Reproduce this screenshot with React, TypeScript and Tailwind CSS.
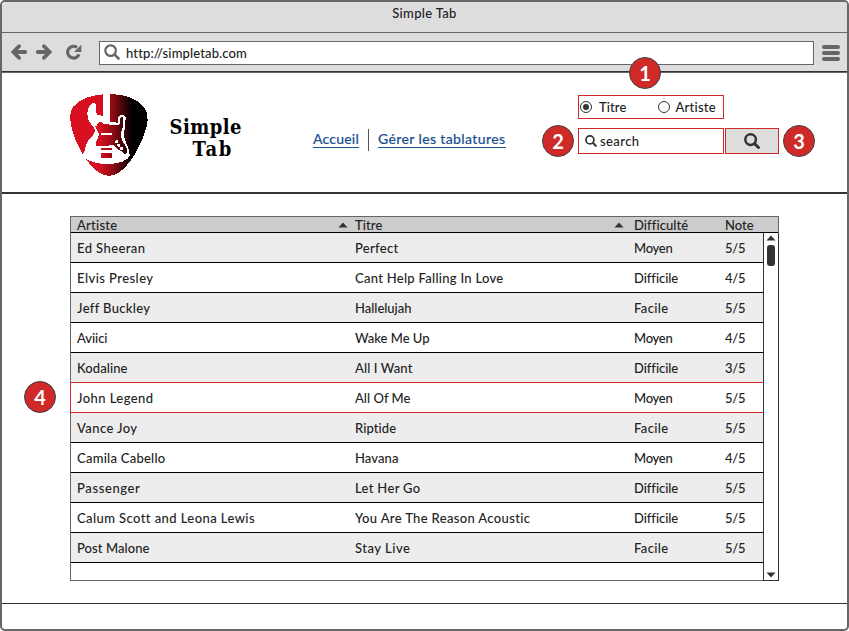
import { useLayoutEffect, useRef, useState } from "react";

// Text tracked so that it spans a given width in pixels.
function Fit({ t, w, className = "" }: { t: string; w: number; className?: string }) {
  const ref = useRef<HTMLSpanElement>(null);
  const [spacing, setSpacing] = useState(0);
  useLayoutEffect(() => {
    if (ref.current) {
      setSpacing((w - 0.5 - ref.current.getBoundingClientRect().width) / t.length);
    }
  }, [t, w]);
  return (
    <span ref={ref} className={`inline-block whitespace-pre ${className}`} style={{ letterSpacing: spacing }}>
      {t}
    </span>
  );
}

type Cell = [string, number];
const rows: [Cell, Cell, Cell, string][] = [
  [["Ed Sheeran", 69], ["Perfect", 44], ["Moyen", 39], "5/5"],
  [["Elvis Presley", 77], ["Cant Help Falling In Love", 149], ["Difficile", 44], "4/5"],
  [["Jeff Buckley", 73.5], ["Hallelujah", 57], ["Facile", 35], "5/5"],
  [["Aviici", 31], ["Wake Me Up", 75], ["Moyen", 39], "4/5"],
  [["Kodaline", 51], ["All I Want", 58], ["Difficile", 44], "3/5"],
  [["John Legend", 77], ["All Of Me", 56], ["Moyen", 39], "5/5"],
  [["Vance Joy", 61], ["Riptide", 42], ["Facile", 35], "5/5"],
  [["Camila Cabello", 89], ["Havana", 44], ["Moyen", 39], "4/5"],
  [["Passenger", 64], ["Let Her Go", 66], ["Difficile", 44], "5/5"],
  [["Calum Scott and Leona Lewis", 178], ["You Are The Reason Acoustic", 176], ["Difficile", 44], "5/5"],
  [["Post Malone", 73], ["Stay Live", 56], ["Facile", 35], "5/5"],
];

function Search({ className, sw }: { className: string; sw: number }) {
  return (
    <svg viewBox="0 0 16 16" className={className} fill="none" stroke="currentColor" strokeWidth={sw}>
      <circle cx="6.6" cy="6.6" r="5.3" />
      <path d="M10.6 10.6l3.9 3.9" strokeLinecap="round" strokeWidth={sw + 0.4} />
    </svg>
  );
}

function Badge({ n, className }: { n: string; className: string }) {
  return (
    <div
      className={`absolute flex size-8 items-center justify-center rounded-full border border-[#444] bg-[#cf2a27] pb-px font-['Lato'] text-[20px] leading-none font-bold text-white ${className}`}
    >
      {n}
    </div>
  );
}

function Up({ className = "" }: { className?: string }) {
  return (
    <svg viewBox="0 0 10 6" className={`h-[6px] w-[10px] ${className}`} fill="#333">
      <path d="M5 .5L9.5 5.5H.5z" />
    </svg>
  );
}

function Logo() {
  return (
    <svg viewBox="0 0 300 300" className="size-[100px]" shapeRendering="crispEdges">
      <defs>
        <linearGradient id="pick" gradientUnits="userSpaceOnUse" x1="118" y1="0" x2="216" y2="0">
          <stop offset="0" stopColor="#d80f20" />
          <stop offset="0.3" stopColor="#a80c18" />
          <stop offset="1" stopColor="#000" />
        </linearGradient>
      </defs>
      <path
        fill="url(#pick)"
        d="M147 27C105 27 62 38 40 65C29 78 29 98 33 120C39 151 53 183 70 210C90 242 117 273 147 273C178 273 204 240 222 212C240 181 253 153 260 123C266 99 262 78 252 66C230 38 188 27 147 27Z"
      />
      {/* guitar silhouette */}
      <path
        fill="#fff"
        d="M129 20H151V111L173 113C178 108 169 102 175 95C183 85 198 88 197 101C194 116 198 127 191 143C189 162 209 188 209 211C205 224 183 237 147 237C113 237 82 231 66 211C73 200 77 193 78 180C80 165 106 151 105 135C101 125 86 113 83 98C80 80 85 60 96 55C106 52 113 60 108 66C104 76 110 86 113 92L129 94Z"
      />
      <path fill="#fff" d="M112 90L126 92V112H112z" />
      {/* pickguard */}
      <path
        fill="url(#pick)"
        d="M106 125C112 122 116 110 124 109L130 117L151 119L176 121C184 116 175 106 181 99C186 92 193 98 190 107C187 119 190 130 184 141C179 154 188 171 198 185C204 196 201 208 194 207C187 205 186 196 175 194C167 192 162 176 152 180L140 183H110C104 176 110 166 114 158C121 145 111 137 106 125Z"
      />
      <path fill="#fff" d="M123 144H156V150H123zM104 183H158V190H104z" />
      <path fill="url(#pick)" d="M123 190H156V195H123zM123 204H156V219H123z" />
      <g fill="#fff">
        <circle cx="170" cy="170" r="4.5" />
        <circle cx="176" cy="181" r="4.5" />
        <circle cx="184" cy="190" r="5.5" />
      </g>
    </svg>
  );
}

export default function App() {
  return (
    <div className="relative h-[631px] w-[849px] bg-white font-['Lato',sans-serif] text-[13px] leading-[16px] font-medium text-[#222]">
      <div className="flex h-full flex-col overflow-hidden rounded-[5px] border-2 border-[#666]">
        <div className="flex h-[30px] shrink-0 justify-center bg-[#ddd] pt-[3px]">
          <Fit t="Simple Tab" w={65} />
        </div>
        <div className="flex h-[39px] shrink-0 items-center border-t border-[#666] bg-[#ddd] pt-px pl-[9px] text-[#666]">
          <svg
            viewBox="0 0 16 16"
            className="-mt-px size-4"
            fill="none"
            stroke="currentColor"
            strokeWidth="3.8"
            strokeLinecap="round"
          >
            <path d="M8 2.2L2.4 8L8 13.8M3 8H14.2" />
          </svg>
          <svg
            viewBox="0 0 16 16"
            className="-mt-px ml-[9px] size-4"
            fill="none"
            stroke="currentColor"
            strokeWidth="3.8"
            strokeLinecap="round"
          >
            <path d="M8 2.2L13.6 8L8 13.8M13 8H1.8" />
          </svg>
          <svg viewBox="0 0 17 16" className="-mt-px mr-px ml-[13px] h-4 w-[17px]">
            <path d="M14 10.4A5.9 5.9 0 1 1 12 3.4" fill="none" stroke="currentColor" strokeWidth="3.1" />
            <path d="M16.4 .8V8H9z" fill="currentColor" />
          </svg>
          <div className="ml-4 flex h-6 w-[715px] shrink-0 items-center border border-[#666] bg-white pl-1 text-[#222]">
            <Search className="-mt-px size-4 text-[#666]" sw={2.2} />
            <Fit t="http://simpletab.com" w={121} className="ml-[6px]" />
          </div>
          <div className="ml-2 flex flex-col gap-[2px]">
            <i className="h-1 w-[18px] rounded-full bg-[#666]" />
            <i className="h-1 w-[18px] rounded-full bg-[#666]" />
            <i className="h-1 w-[18px] rounded-full bg-[#666]" />
          </div>
        </div>
        <div className="-mx-px flex h-[533px] shrink-0 flex-col border border-[#333]">
          <header className="flex h-[122px] shrink-0 border-t border-b-2 border-t-[#666] border-b-[#333] pl-[58px]">
            <div className="mt-3 shrink-0">
              <Logo />
            </div>
            <div className="mt-[43px] ml-2 flex w-[74px] shrink-0 flex-col items-end font-['DejaVu_Serif_Condensed','DejaVu_Serif',serif] text-[20px] leading-[22px] font-bold text-black">
              <Fit t="Simple" w={73} />
              <Fit t="Tab" w={41} className="mr-[9px]" />
            </div>
            <nav className="mt-[56px] ml-[71px] flex h-[23px] w-[265px] shrink-0 text-[14px] leading-[20px] text-[#1b5091] [-webkit-text-stroke:0.15px]">
              <a className="h-[19px] border-b border-[#1b5091]">
                <Fit t="Accueil" w={46.5} />
              </a>
              <div className="mx-[9px] h-[22px] w-px bg-[#555]" />
              <a className="h-[19px] border-b border-[#1b5091]">
                <Fit t="Gérer les tablatures" w={128} />
              </a>
            </nav>
            <div className="mt-[22px] flex shrink-0 flex-col gap-[9px]">
              <div className="flex h-6 w-[146px] items-center border border-[#cf2a27] pl-[1px]">
                <i className="flex size-3 items-center justify-center rounded-full border border-[#333]">
                  <b className="size-[6px] rounded-full bg-[#333]" />
                </i>
                <Fit t="Titre" w={28} className="ml-[7px]" />
                <i className="ml-[31px] size-3 rounded-full border border-[#333]" />
                <Fit t="Artiste" w={41} className="ml-[6px]" />
              </div>
              <div className="flex gap-px">
                <div className="flex h-[26px] w-[146px] items-center border border-[#cf2a27] pl-[6px]">
                  <Search className="size-3 text-[#333]" sw={2.3} />
                  <Fit t="search" w={40} className="-mt-px ml-[3px]" />
                </div>
                <div className="flex h-[26px] w-[54px] items-center justify-center border border-[#cf2a27] bg-[#ddd]">
                  <Search className="-mt-px size-4 text-[#333]" sw={2.5} />
                </div>
              </div>
            </div>
          </header>
          <main className="mt-[22px] ml-[68px] flex h-[365px] w-[709px] flex-col border border-[#666]">
            <div className="flex h-[15px] shrink-0 items-center bg-[#ccc] pl-[6px]">
              <div className="flex w-[278px] items-center">
                <Fit t="Artiste" w={41} />
                <Up className="mr-[7px] ml-auto" />
              </div>
              <div className="flex w-[279px] items-center">
                <Fit t="Titre" w={28} />
                <Up className="mr-[10px] ml-auto" />
              </div>
              <div className="w-[91px]">
                <Fit t="Difficulté" w={54} />
              </div>
              <Fit t="Note" w={29} />
            </div>
            <div className="flex min-h-0 flex-1 border-t border-black">
              <div className="w-[692px]">
                {rows.map((r, i) => (
                  <div
                    key={i}
                    className={`flex h-[30px] items-center border-b pl-[6px] ${i % 2 ? "bg-white" : "bg-[#ededed]"} ${i === 4 || i === 5 ? "border-[#cf2a27]" : "border-black"} ${i === 5 ? "-ml-px border-l" : ""}`}
                  >
                    <div className="w-[278px]">
                      <Fit t={r[0][0]} w={r[0][1]} />
                    </div>
                    <div className="w-[279px]">
                      <Fit t={r[1][0]} w={r[1][1]} />
                    </div>
                    <div className="w-[91px]">
                      <Fit t={r[2][0]} w={r[2][1]} />
                    </div>
                    <Fit t={r[3]} w={21} />
                  </div>
                ))}
              </div>
              <div className="-mr-px -mb-px flex w-4 flex-col items-center border-r border-b border-l border-[#333] pt-[2px] pb-[2px]">
                <Up />
                <div className="mt-1 h-[21px] w-2 rounded-[3px] bg-[#333]" />
                <Up className="mt-auto rotate-180" />
              </div>
            </div>
          </main>
        </div>
      </div>
      <Badge n="1" className="top-[57px] left-[629px]" />
      <Badge n="2" className="top-[125px] left-[542px]" />
      <Badge n="3" className="top-[125px] left-[783px]" />
      <Badge n="4" className="top-[381px] left-[24px]" />
    </div>
  );
}
